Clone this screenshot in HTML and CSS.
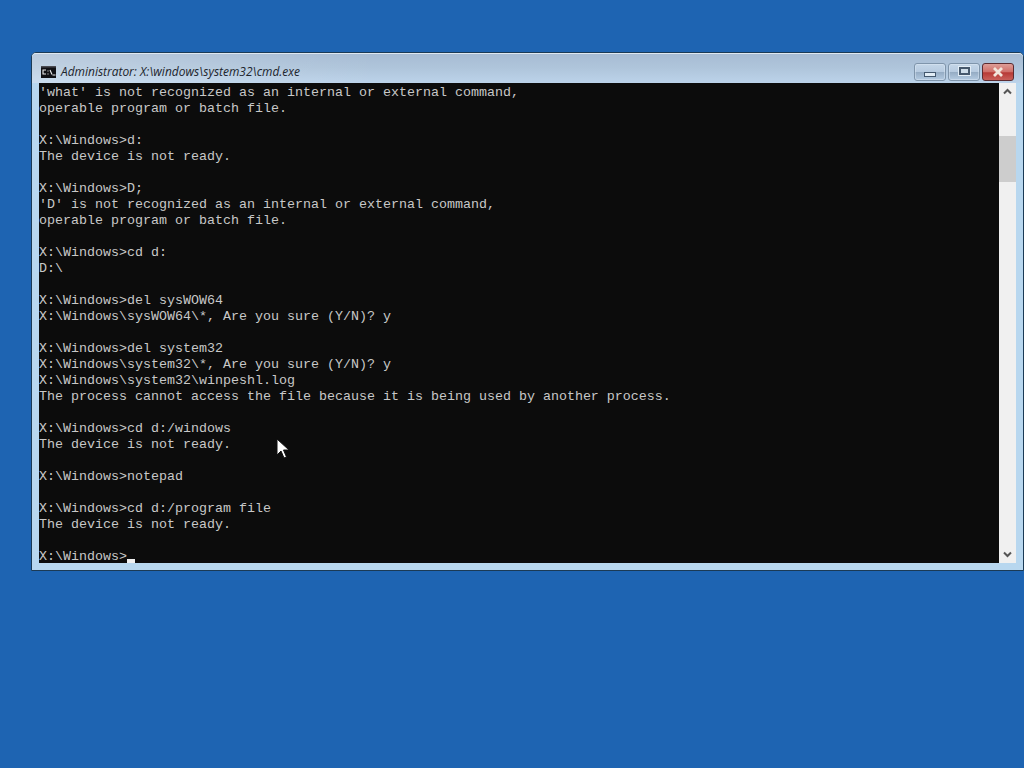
FILE: index.html
```html
<!DOCTYPE html>
<html lang="en">
<head>
<meta charset="utf-8">
<title>Administrator: X:\windows\system32\cmd.exe</title>
<link rel="stylesheet" href="styles.css">
</head>
<body>
<div class="window">
  <div class="titlebar">
    <svg class="app-icon" width="15" height="12" viewBox="0 0 15 12">
      <rect width="15" height="12" fill="#101014"/>
      <rect y="0" width="15" height="1.500" fill="#4a4b52"/>
      <path d="M5 4H2v4h3M6.500 5h1M6.500 8h1M9 4l2 4.500M11.500 9h3" stroke="#eeeeee" stroke-width="1.100" fill="none"/>
    </svg>
    <span class="title">Administrator: X:\windows\system32\cmd.exe</span>
    <div class="controls">
      <div class="ctl"><span class="min-glyph"></span></div>
      <div class="ctl"><span class="max-glyph"></span></div>
      <div class="ctl close">
        <svg width="14" height="10" viewBox="0 0 14 10"><path d="M3 1l8 8M11 1l-8 8" stroke="#f2e6dc" stroke-width="2.800"/></svg>
      </div>
    </div>
  </div>
  <div class="client">
<pre class="console">'what' is not recognized as an internal or external command,
operable program or batch file.

X:\Windows&gt;d:
The device is not ready.

X:\Windows&gt;D;
'D' is not recognized as an internal or external command,
operable program or batch file.

X:\Windows&gt;cd d:
D:\

X:\Windows&gt;del sysWOW64
X:\Windows\sysWOW64\*, Are you sure (Y/N)? y

X:\Windows&gt;del system32
X:\Windows\system32\*, Are you sure (Y/N)? y
X:\Windows\system32\winpeshl.log
The process cannot access the file because it is being used by another process.

X:\Windows&gt;cd d:/windows
The device is not ready.

X:\Windows&gt;notepad

X:\Windows&gt;cd d:/program file
The device is not ready.

X:\Windows&gt;<span class="cursor"></span></pre>
    <div class="scrollbar">
      <svg class="arrow" width="17" height="17" viewBox="0 0 17 17"><path d="M5 10.500l3.500-3.500 3.500 3.500" stroke="#555" stroke-width="2" fill="none"/></svg>
      <div class="track"><div class="thumb"></div></div>
      <svg class="arrow" width="17" height="17" viewBox="0 0 17 17"><path d="M5 6.500l3.500 3.500 3.500-3.500" stroke="#555" stroke-width="2" fill="none"/></svg>
    </div>
  </div>
</div>
<svg class="pointer" width="13" height="21" viewBox="0 0 13 21">
  <path d="M1 1v16l4-4 3 7 2.500-1-3-7h5.500z" fill="#fff" stroke="#111" stroke-width="1"/>
</svg>
</body>
</html>
```
FILE: styles.css
```css
html, body {
  margin: 0;
  padding: 0;
  height: 768px;
  overflow: hidden;
}
body {
  position: relative;
  background: #1e64b2;
  padding-top: 52px;
  padding-left: 31px;
  box-sizing: border-box;
}
.window {
  width: 993px;
  height: 519px;
  box-sizing: border-box;
  border: 1px solid #1b3a55;
  border-radius: 5px 5px 0 0;
  background: #b8d7ef;
  padding: 0 7px 7px 7px;
  display: flex;
  flex-direction: column;
}
.titlebar {
  height: 30px;
  margin: 0 -7px;
  padding: 0 9px 0 9px;
  display: flex;
  align-items: center;
  gap: 5px;
  border-radius: 4px 4px 0 0;
  box-shadow: inset 0 1px 0 #dfe8f0;
  background:
    linear-gradient(90deg, rgba(255, 255, 255, .22), rgba(255, 255, 255, 0) 35%),
    linear-gradient(180deg, #a6bbd3 0%, #afc5db 50%, #bcd3ea 100%);
}
.app-icon { flex: none; margin-top: 8px; }
.title {
  font: italic 11.95px/16px "Open Sans", "Liberation Sans", sans-serif;
  color: #20242c;
  margin-top: 8px;
}
.controls {
  margin-left: auto;
  margin-top: 8px;
  display: flex;
  gap: 2px;
}
.ctl {
  width: 32px;
  height: 18px;
  box-sizing: border-box;
  border: 1px solid #7f95ab;
  border-radius: 3px;
  box-shadow: inset 0 0 0 1px rgba(225, 236, 246, .45);
  background: linear-gradient(180deg, #c4d6e8 0%, #b7cbe0 48%, #95acc4 52%, #b4cbe2 100%);
  display: flex;
  align-items: center;
  justify-content: center;
}
.close {
  border-color: #5c2b30;
  box-shadow: none;
  background: linear-gradient(180deg, #dd9d97 0%, #d0706a 48%, #b73a36 55%, #c9605a 100%);
}
.min-glyph {
  width: 10px;
  height: 3px;
  margin-top: 4px;
  background: #e2edf6;
  border: 1px solid #44586e;
}
.max-glyph {
  width: 7px;
  height: 4px;
  border: 2px solid #46586c;
  background: #cfdde9;
  box-shadow: 0 0 0 1px #e2edf6;
  margin-top: -3px;
}
.client {
  flex: 1;
  min-height: 0;
  display: flex;
  background: #0c0c0c;
}
.console {
  flex: 1;
  margin: 0;
  padding-top: 2px;
  overflow: hidden;
  font: 13.33px/16px "Liberation Mono", "DejaVu Sans Mono", monospace;
  color: #c8c8c8;
}
.cursor {
  display: inline-block;
  width: 8px;
  height: 4px;
  background: #f0f0f0;
  vertical-align: -3px;
}
.scrollbar {
  width: 17px;
  flex: none;
  display: flex;
  flex-direction: column;
  background: #f0f0f0;
}
.arrow { flex: none; }
.track { flex: 1; padding-top: 36px; }
.thumb {
  height: 46px;
  background: #cdcdcd;
}
.pointer {
  position: absolute;
  left: 276px;
  top: 438px;
}
```
